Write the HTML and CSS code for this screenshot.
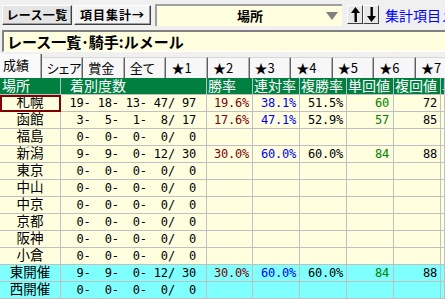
FILE: index.html
```html
<!DOCTYPE html>
<html lang="ja">
<head>
    <meta charset="UTF-8">
    <title>項目集計</title>
    <link rel="stylesheet" href="styles.css">
</head>
<body>

<div class="toolbar">
    <button class="btn btn-list">レース一覧</button>
    <button class="btn btn-agg">項目集計→</button>
    <div class="select">
        <span class="select-text">場所</span>
        <svg class="select-arrow" width="12" height="8" viewBox="0 0 12 8"><polygon points="0,0 12,0 6,8" fill="#808080"/></svg>
    </div>
    <div class="sort">
        <button class="sort-btn"><svg width="9" height="15" viewBox="0 0 9 15"><polygon points="4.5,0 0,6 9,6" fill="#000"/><rect x="3.5" y="5" width="2.4" height="10" fill="#000"/></svg></button>
        <button class="sort-btn"><svg width="9" height="15" viewBox="0 0 9 15"><rect x="3.5" y="0" width="2.4" height="10" fill="#000"/><polygon points="4.5,15 0,9 9,9" fill="#000"/></svg></button>
    </div>
    <a class="menu-link">集計項目メニュー</a>
</div>

<div class="title">レース一覧･騎手:ルメール</div>

<div class="tabs">
    <div class="tab active">成績</div>
    <div class="tab">シェア</div>
    <div class="tab">賞金</div>
    <div class="tab">全て</div>
    <div class="tab">★1</div>
    <div class="tab">★2</div>
    <div class="tab">★3</div>
    <div class="tab">★4</div>
    <div class="tab">★5</div>
    <div class="tab">★6</div>
    <div class="tab">★7</div>
</div>

<div class="grid">
    <div class="row head">
        <div class="c place">場所</div>
        <div class="c count">着別度数</div>
        <div class="c">勝率</div>
        <div class="c">連対率</div>
        <div class="c">複勝率</div>
        <div class="c">単回値</div>
        <div class="c">複回値</div>
        <div class="c">単勝</div>
    </div>
    <div class="row">
        <div class="c place selected">札幌</div>
        <div class="c count num">19- 18- 13- 47/ 97</div>
        <div class="c num win">19.6%</div>
        <div class="c num ren">38.1%</div>
        <div class="c num fuku">51.5%</div>
        <div class="c num tan">60</div>
        <div class="c num fk">72</div>
        <div class="c"></div>
    </div>
    <div class="row">
        <div class="c place">函館</div>
        <div class="c count num"> 3-  5-  1-  8/ 17</div>
        <div class="c num win">17.6%</div>
        <div class="c num ren">47.1%</div>
        <div class="c num fuku">52.9%</div>
        <div class="c num tan">57</div>
        <div class="c num fk">85</div>
        <div class="c"></div>
    </div>
    <div class="row">
        <div class="c place">福島</div>
        <div class="c count num"> 0-  0-  0-  0/  0</div>
        <div class="c"></div><div class="c"></div><div class="c"></div><div class="c"></div><div class="c"></div><div class="c"></div>
    </div>
    <div class="row">
        <div class="c place">新潟</div>
        <div class="c count num"> 9-  9-  0- 12/ 30</div>
        <div class="c num win">30.0%</div>
        <div class="c num ren">60.0%</div>
        <div class="c num fuku">60.0%</div>
        <div class="c num tan">84</div>
        <div class="c num fk">88</div>
        <div class="c"></div>
    </div>
    <div class="row">
        <div class="c place">東京</div>
        <div class="c count num"> 0-  0-  0-  0/  0</div>
        <div class="c"></div><div class="c"></div><div class="c"></div><div class="c"></div><div class="c"></div><div class="c"></div>
    </div>
    <div class="row">
        <div class="c place">中山</div>
        <div class="c count num"> 0-  0-  0-  0/  0</div>
        <div class="c"></div><div class="c"></div><div class="c"></div><div class="c"></div><div class="c"></div><div class="c"></div>
    </div>
    <div class="row">
        <div class="c place">中京</div>
        <div class="c count num"> 0-  0-  0-  0/  0</div>
        <div class="c"></div><div class="c"></div><div class="c"></div><div class="c"></div><div class="c"></div><div class="c"></div>
    </div>
    <div class="row">
        <div class="c place">京都</div>
        <div class="c count num"> 0-  0-  0-  0/  0</div>
        <div class="c"></div><div class="c"></div><div class="c"></div><div class="c"></div><div class="c"></div><div class="c"></div>
    </div>
    <div class="row">
        <div class="c place">阪神</div>
        <div class="c count num"> 0-  0-  0-  0/  0</div>
        <div class="c"></div><div class="c"></div><div class="c"></div><div class="c"></div><div class="c"></div><div class="c"></div>
    </div>
    <div class="row">
        <div class="c place">小倉</div>
        <div class="c count num"> 0-  0-  0-  0/  0</div>
        <div class="c"></div><div class="c"></div><div class="c"></div><div class="c"></div><div class="c"></div><div class="c"></div>
    </div>
    <div class="row sum">
        <div class="c place">東開催</div>
        <div class="c count num"> 9-  9-  0- 12/ 30</div>
        <div class="c num win">30.0%</div>
        <div class="c num ren">60.0%</div>
        <div class="c num fuku">60.0%</div>
        <div class="c num tan">84</div>
        <div class="c num fk">88</div>
        <div class="c"></div>
    </div>
    <div class="row sum">
        <div class="c place">西開催</div>
        <div class="c count num"> 0-  0-  0-  0/  0</div>
        <div class="c"></div><div class="c"></div><div class="c"></div><div class="c"></div><div class="c"></div><div class="c"></div>
    </div>
</div>

</body>
</html>
```

FILE: styles.css
```css
body {
    margin: 0;
    width: 445px;
    height: 299px;
    overflow: hidden;
    background-color: #f0f0f0;
    font-family: "Noto Sans CJK JP", sans-serif;
    color: #000;
}
.toolbar {
    display: flex;
    align-items: center;
    height: 29px;
    padding-left: 2px;
    white-space: nowrap;
    overflow: hidden;
}
.toolbar > * {
    flex-shrink: 0;
}
.btn {
    box-sizing: border-box;
    height: 20px;
    padding: 0;
    font: bold 12px "Noto Sans CJK JP", sans-serif;
    line-height: 16px;
    letter-spacing: 0.3px;
    text-align: center;
    border: 1px solid;
    border-color: #fff #404040 #404040 #fff;
    box-shadow: inset -1px -1px #a0a0a0;
    background-color: #e4e4e4;
    white-space: nowrap;
    overflow: visible;
}
.btn-list {
    width: 70px;
}
.btn-agg {
    width: 77px;
    margin-left: 2px;
    letter-spacing: 1px;
    background-color: #f4f4f4;
}
.select {
    box-sizing: border-box;
    display: flex;
    align-items: center;
    width: 187px;
    height: 22px;
    margin-left: 4px;
    padding-left: 80px;
    background-color: #ffffe0;
    border-top: 2px solid #a0a0a0;
    border-left: 2px solid #a0a0a0;
}
.select-text {
    font-weight: bold;
    font-size: 13px;
}
.select-arrow {
    margin-left: auto;
    margin-right: 4px;
}
.sort {
    display: flex;
    margin-left: 5px;
}
.sort-btn {
    box-sizing: border-box;
    width: 16px;
    height: 19px;
    padding: 0;
    display: flex;
    align-items: center;
    justify-content: center;
    border: 1px solid;
    border-color: #fff #404040 #404040 #fff;
    background-color: #e8e8e8;
}
.menu-link {
    margin-left: 6px;
    color: #0000ff;
    font-size: 14px;
}
.title {
    box-sizing: border-box;
    height: 22px;
    margin: 1px 0 0 2px;
    padding-left: 3px;
    background-color: #ffffe0;
    border-top: 2px solid #808080;
    border-left: 2px solid #808080;
    border-bottom: 1px solid #fff;
    font-weight: bold;
    font-size: 15px;
    line-height: 19px;
    white-space: nowrap;
}
.tabs {
    display: flex;
    align-items: flex-end;
    height: 24px;
    margin-top: 2px;
    white-space: nowrap;
}
.tab {
    box-sizing: border-box;
    flex: 0 0 41.6px;
    height: 21px;
    padding-left: 5px;
    font-size: 13px;
    line-height: 19px;
    font-feature-settings: "palt";
    background-color: #f7f7f7;
    border-top: 1px solid #d8d8d8;
    border-right: 1px solid #606060;
    box-shadow: inset -1px 0 #b0b0b0;
}
.tab.active {
    height: 24px;
    padding-left: 3px;
    background-color: #fafafa;
    border-top: none;
    line-height: 22px;
}
.grid {
    background-color: #ffffe0;
}
.row {
    display: grid;
    grid-template-columns: 61px 146px 46px 47px 47px 47px 47px 1fr;
    height: 17px;
}
.c {
    box-sizing: border-box;
    height: 17px;
    border-right: 1px solid #c0c0c0;
    border-bottom: 1px solid #c0c0c0;
    font-size: 13.5px;
    line-height: 13px;
    white-space: pre;
}
.c:last-child {
    overflow: hidden;
}
.head .c {
    background-color: #008040;
    color: #fff;
    font-size: 14px;
    line-height: 15px;
    padding-left: 1px;
}
.head .place {
    padding-left: 2px;
    text-align: left;
}
.head .count {
    padding-left: 9px;
}
.place {
    text-align: center;
}
.selected {
    outline: 2px solid #800000;
    outline-offset: -2px;
}
.num {
    font-family: "DejaVu Sans Mono", monospace;
    font-size: 12px;
    line-height: 16px;
    letter-spacing: -0.2px;
    text-align: right;
    padding-right: 3px;
}
.count {
    padding-right: 10px;
}
.win {
    color: #800000;
}
.ren {
    color: #0000ff;
}
.tan {
    color: #008000;
    padding-right: 4px;
}
.sum .c {
    background-color: #80ffff;
}
```
